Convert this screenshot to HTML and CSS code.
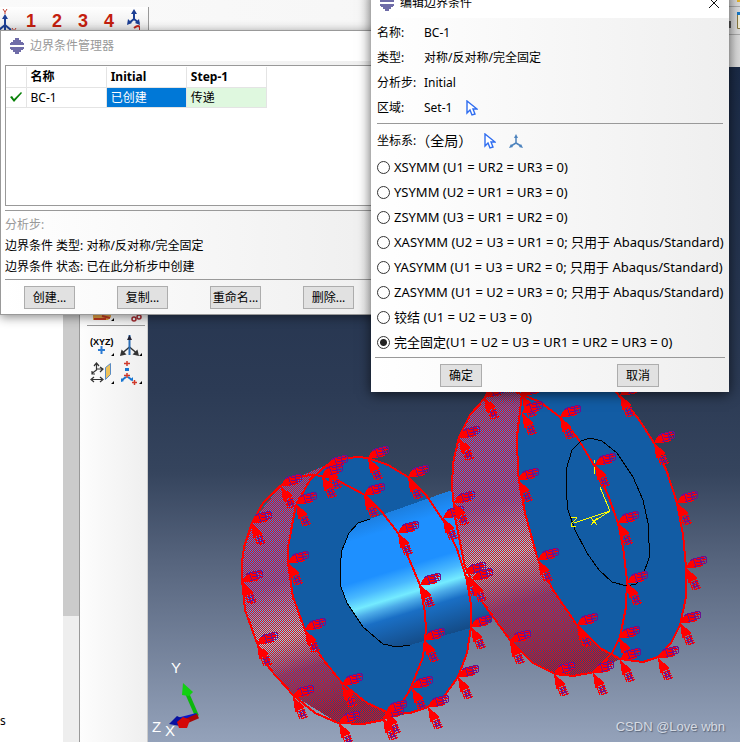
FILE: index.html
```html
<!DOCTYPE html>
<html lang="zh-CN">
<head>
<meta charset="utf-8">
<title>边界条件管理器</title>
<link rel="stylesheet" href="styles.css">
</head>
<body>
<div class="workspace">
  <header class="toolbars">
    <div class="views">
      <svg class="axes" width="18" height="24" viewBox="0 0 18 24"><path d="M5 22V8M5 17l-6 5M5 17l6 5" stroke="#1c3f94" stroke-width="2" fill="none"/><path d="M2 11l3-5 3 5z" fill="#1c3f94"/><path d="M3 1l2 3 2-3M5 4v2M12 20l2 3 2-3" stroke="#c0392b" fill="none"/></svg>
      <button type="button">1</button><button type="button">2</button><button type="button">3</button><button type="button">4</button>
      <svg class="axes" width="18" height="22" viewBox="0 0 18 22"><path d="M12 11V4M12 11l-5 4M12 11l5 4" stroke="#1c3f94" stroke-width="2" fill="none"/><path d="M9 6l3-5 3 5zM5 17l1-6 4 4zM18 17l-1-6-4 4z" fill="#1c3f94"/><path d="M12 20q5-4 6 0v3" stroke="#c0261a" stroke-width="2" fill="none"/></svg>
    </div>
    <div class="side-tools">
      <svg width="11" height="64" viewBox="0 0 11 64"><path d="M0 6.500h11M0 34.500h11" stroke="#aaa"/><path d="M8 0h3v2H8z" fill="#e5b52f"/><path d="M0 21h2v7H0z" fill="#555"/><path d="M8.500 13.500h3v15h-3z" fill="#f4efd6" stroke="#8a7a40"/><path d="M8 12h3v3H8z" fill="#1579c8"/></svg>
    </div>
  </header>
  <main class="main">
    <aside class="tree"><span>s</span></aside>
    <div class="scroll"><div class="thumb"></div></div>
    <nav class="toolbox">
      <svg width="68" height="100" viewBox="80 300 68 100">
        <path d="M93 313h18v4l-3 3H93z" fill="#e5a446"/><path d="M94 319h12M102 316l8 2" stroke="#c23a22" stroke-width="2"/>
        <g fill="none" stroke="#a32a30" stroke-width="1.500"><circle cx="134" cy="319" r="2"/><circle cx="139" cy="317" r="2"/></g>
        <path d="M87 325.500h58" stroke="#999"/>
        <text x="90" y="345" class="xyz">(XYZ)</text>
        <path d="M98 350h7M101.500 346v8" stroke="#2b7bd3" stroke-width="2"/>
        <g stroke="#333" stroke-width="1.500" fill="#333"><path d="M129.500 347l-7 6M129.500 347l7 6"/><path d="M121 355l1-4 3 3zM138 355l-1-4-3 3z"/></g>
        <path d="M129.500 335v20" stroke="#2b6db5" stroke-width="2"/><path d="M127 340l2.500-5 2.500 5z" fill="#223"/>
        <g stroke="#333" stroke-width="1.200" fill="none"><path d="M96.500 364v6l-4 3M96.500 369h6M92 379.500h10M94 366l2.500-3 2.500 3M92 371v3h3M100 367l3 2-3 3M94 377l-3 2.500 3 2.500M100 377l3 2.500-3 2.500"/></g>
        <path d="M105.500 367.500l5-4v11l-5 5z" fill="#efc25a" stroke="#5a8cc4"/>
        <g stroke="#d0392b" stroke-width="1.500"><path d="M124 363.500h6M127 361v5M124 375.500h6M127 373v5M132 382.500h5M134.500 380v5"/></g>
        <path d="M125 368h4v3h-4z" fill="#1675d1"/><path d="M126 377l-4 3M128 377l4 3" stroke="#1675d1" stroke-width="2"/><path d="M121 382v-4l3 3zM133 381v-4l-3 3z" fill="#1675d1"/>
        <path d="M114 318v3h-3zM114 353v3h-3zM142 353v3h-3zM114 381v3h-3zM142 381v3h-3z"/>
      </svg>
    </nav>
    <section class="viewport">
      <svg class="model" viewBox="148 67 592 675" preserveAspectRatio="xMinYMin meet">
        <defs>
          <pattern id="mesh" x="0" y="0" width="2" height="2" patternUnits="userSpaceOnUse"><path d="M1 0h1v1H1zM0 1h1v1H0z" fill="red"/></pattern>
          <linearGradient id="shaft" gradientUnits="userSpaceOnUse" x1="370" y1="519" x2="409" y2="646">
            <stop offset="0" stop-color="#1c80e2"/><stop offset=".12" stop-color="#1e90ff"/><stop offset=".42" stop-color="#1e90ff"/><stop offset=".53" stop-color="#48b8ff"/><stop offset=".62" stop-color="#74ebff"/><stop offset=".68" stop-color="#4cabe8"/><stop offset=".76" stop-color="#1a6fc5"/><stop offset="1" stop-color="#144c88"/>
          </linearGradient>
          <linearGradient id="rimA" gradientUnits="userSpaceOnUse" x1="270" y1="480" x2="340" y2="708">
            <stop offset="0" stop-color="#1c7fe0"/><stop offset=".2" stop-color="#1e90ff"/><stop offset=".42" stop-color="#1e90ff"/><stop offset=".65" stop-color="#74ebff"/><stop offset=".8" stop-color="#1a6fc5"/><stop offset="1" stop-color="#144c88"/>
          </linearGradient>
          <linearGradient id="rimB" gradientUnits="userSpaceOnUse" x1="480" y1="385" x2="566" y2="665">
            <stop offset="0" stop-color="#1c7fe0"/><stop offset=".2" stop-color="#1e90ff"/><stop offset=".4" stop-color="#1e90ff"/><stop offset=".58" stop-color="#74ebff"/><stop offset=".75" stop-color="#1a6fc5"/><stop offset="1" stop-color="#144c88"/>
          </linearGradient>
          <g id="bc">
            <path d="M0 0l2 15 10-5z" fill="red"/>
            <path d="M0 0l5-9 9 0 3 7-9 2z" fill="red"/>
            <g fill="none" stroke="red"><path d="M3 12l4 10M6 11l5 11M9 10l5 11M4 15l8-3M5 18l8-3M7 20l7-3M8 22l7-3"/><path d="M5-8l13-3M5-5l15-4M8-2l12-3M8-9l5 8M12-10l4 8M16-11l3 7"/></g>
            <g fill="none" stroke="#6b1190"><path d="M7 16l5-3M8 19l5-2M9 13l4 8M6 14l3 7"/><path d="M4-7l3-2 12-3 2 3-1 4-12 4M7-9l3 7M14-11l2 7M10-8l9-2M10-5l9-2"/></g>
          </g>
        </defs>
        <g shape-rendering="crispEdges">
          <path d="M300 476L327 465 410 540 410 713 363 724 338 723 293 695 269 668 257 643 245 610 242 580 242 562 252 523 280 486z" fill="url(#rimA)"/>
          <path d="M300 476L327 465 410 540 410 713 363 724 338 723 293 695 269 668 257 643 245 610 242 580 242 562 252 523 280 486z" fill="url(#mesh)"/>
          <path d="M296 505L310 480 327 465 342 459 357 457 368 458 388 465 408 477 426 495 443 520 457 549 467 580 471 605 471 627 467 653 458 677 445 695 428 707 410 713 387 712 367 703 342 683 322 658 305 630 293 597 288 563 288 547z" fill="#125ca4"/>
          <path d="M370 519L452 490 475 540 492 622 410 645 397 647 383 644 363 627 347 603 341 587 340 567 342 550 349 533 358 523z" fill="url(#shaft)"/>
          <path d="M370 519L358 523 349 533 342 550 340 567 341 587 347 603 363 627 383 644 397 647 410 645" fill="none" stroke="#000"/>
          <path d="M300 476L280 486 263 503 252 523 244 547 242 562 242 580 245 610 257 643 269 668 293 695 315 713 338 723 363 724 383 720 398 709 410 690 423 657 426 630 425 613 420 585 398 533 382 512 365 495 333 478 315 475z" class="edge"/>
          <path d="M296 505L310 480 327 465 342 459 357 457 368 458 388 465 408 477 426 495 443 520 457 549 467 580 471 605 471 627 467 653 458 677 445 695 428 707 410 713 387 712 367 703 342 683 322 658 305 630 293 597 288 563 288 547z" class="edge"/>
          <path d="M485 398L500 385 560 365 620 659 595 672 573 676 555 674 533 663 510 640 483 603 473 583 465 567 455 517 452 487 453 463 459 437 470 415z" fill="url(#rimB)"/>
          <path d="M485 398L500 385 560 365 620 659 595 672 573 676 555 674 533 663 510 640 483 603 473 583 465 567 455 517 452 487 453 463 459 437 470 415z" fill="url(#mesh)"/>
          <path d="M522 393L535 370 600 370 620 397 638 418 654 443 667 472 677 503 683 535 686 567 686 597 680 625 671 643 658 657 643 662 620 659 600 648 577 625 553 590 538 560 525 513 518 473 517 437z" fill="#125ca4" class="edge"/>
          <path d="M500 385L485 398 470 415 459 437 453 463 452 487 455 517 465 567 473 583 483 603 510 640 533 663 555 674 573 676 595 672 612 653 620 637 626 607 627 580 623 547 618 523 608 495 595 467 577 437 560 417 540 402 523 395 500 385z" class="edge"/>
          <path d="M590 438L581 441 572 450 566 470 566 490 568 510 575 530 587 553 599 570 612 582 627 586 636 584 643 575 649 558 649 543 648 523 643 500 633 477 617 453 602 441z" fill="none" stroke="#000"/>
          <path d="M594 460v3M594 467v7M600 487l10 24-36 12M610 511l-17 11" fill="none" stroke="#ff0"/>
          <path d="M571 517h5v2l-5 5v2h5M591 518l6 7M597 518l-6 7" fill="none" stroke="#ff0"/>
          <use href="#bc" x="368" y="458"/><use href="#bc" x="408" y="477"/><use href="#bc" x="443" y="518"/><use href="#bc" x="327" y="467"/><use href="#bc" x="322" y="476"/><use href="#bc" x="281" y="486"/><use href="#bc" x="296" y="504"/><use href="#bc" x="364" y="495"/><use href="#bc" x="398" y="533"/><use href="#bc" x="420" y="585"/><use href="#bc" x="424" y="640"/><use href="#bc" x="412" y="688"/><use href="#bc" x="428" y="707"/><use href="#bc" x="383" y="718"/><use href="#bc" x="386" y="712"/><use href="#bc" x="342" y="685"/><use href="#bc" x="339" y="723"/><use href="#bc" x="293" y="697"/><use href="#bc" x="257" y="644"/><use href="#bc" x="242" y="582"/><use href="#bc" x="251" y="523"/><use href="#bc" x="288" y="563"/><use href="#bc" x="305" y="630"/><use href="#bc" x="465" y="574"/><use href="#bc" x="471" y="627"/><use href="#bc" x="458" y="677"/>
          <use href="#bc" x="484" y="397"/><use href="#bc" x="459" y="438"/><use href="#bc" x="454" y="503"/><use href="#bc" x="472" y="580"/><use href="#bc" x="522" y="395"/><use href="#bc" x="522" y="413"/><use href="#bc" x="560" y="417"/><use href="#bc" x="620" y="395"/><use href="#bc" x="654" y="443"/><use href="#bc" x="677" y="503"/><use href="#bc" x="686" y="568"/><use href="#bc" x="680" y="623"/><use href="#bc" x="658" y="658"/><use href="#bc" x="595" y="465"/><use href="#bc" x="618" y="523"/><use href="#bc" x="627" y="583"/><use href="#bc" x="619" y="638"/><use href="#bc" x="620" y="660"/><use href="#bc" x="593" y="673"/><use href="#bc" x="554" y="674"/><use href="#bc" x="510" y="642"/><use href="#bc" x="577" y="625"/><use href="#bc" x="538" y="560"/><use href="#bc" x="518" y="480"/>
        </g>
        <path d="M197 716l-10-23" stroke="#0bb80b" stroke-width="4"/><path d="M183 683l10 9-4 4-7-1z" fill="#12d012"/>
        <path d="M197 715l-20 5" stroke="#0b16c8" stroke-width="4"/><path d="M169 724l8-8 4 2-1 8z" fill="#0710a0"/>
        <path d="M198 716l-14 6" stroke="#a80606" stroke-width="5"/><path d="M177 722l6-5 7 3-3 8h-8z" fill="#d40808"/>
        <g class="axis-name"><text x="171" y="673">Y</text><text x="152" y="732">Z</text><text x="165" y="736">X</text></g>
      </svg>
      <p class="watermark">CSDN @Love wbn</p>
    </section>
  </main>

  <section class="window manager">
    <h1 class="titlebar"><svg width="16" height="16" viewBox="0 0 16 16"><path d="M6 0h4v2h2v2h2v1h1v2H1V5h1V4h2V2h2zM1 9h14v2h-1v1h-2v2h-2v2H6v-2H4v-2H2v-1H1z" fill="#6f6ca8"/></svg><span>边界条件管理器</span></h1>
    <div class="list">
      <table>
        <thead><tr><th class="mark"></th><th>名称</th><th>Initial</th><th>Step-1</th></tr></thead>
        <tbody><tr><td class="mark"><svg width="14" height="12" viewBox="0 0 14 12"><path d="M1 6l2-1 2 3 7-7 1 1-8 9z" fill="#088008"/></svg></td><td>BC-1</td><td class="picked">已创建</td><td class="passed">传递</td></tr></tbody>
      </table>
    </div>
    <div class="status">
      <p class="muted">分析步:</p>
      <p>边界条件 类型: 对称/反对称/完全固定</p>
      <p>边界条件 状态: 已在此分析步中创建</p>
    </div>
    <div class="actions"><button type="button">创建...</button><button type="button">复制...</button><button type="button">重命名...</button><button type="button">删除...</button></div>
  </section>

  <form class="window editor">
    <h2 class="titlebar"><svg width="16" height="16" viewBox="0 0 16 16"><path d="M6 0h4v2h2v2h2v1h1v2H1V5h1V4h2V2h2zM1 9h14v2h-1v1h-2v2h-2v2H6v-2H4v-2H2v-1H1z" fill="#6f6ca8"/></svg><span>编辑边界条件</span><button type="button" class="close" aria-label="关闭"><svg width="12" height="12" viewBox="0 0 12 12"><path d="M1 1l10 10M11 1L1 11" stroke="#111" fill="none"/></svg></button></h2>
    <dl class="facts">
      <div><dt>名称:</dt><dd>BC-1</dd></div>
      <div><dt>类型:</dt><dd>对称/反对称/完全固定</dd></div>
      <div><dt>分析步:</dt><dd>Initial</dd></div>
      <div><dt>区域:</dt><dd>Set-1 <svg width="12" height="16" viewBox="0 0 12 16"><path d="M1 1v12l3-3 2 5 3-1-2-5h4z" fill="#fff" stroke="#2f6df0" stroke-width="1.400"/></svg></dd></div>
    </dl>
    <div class="csys"><span>坐标系:</span><span class="global">（全局）</span><svg width="12" height="16" viewBox="0 0 12 16"><path d="M1 1v12l3-3 2 5 3-1-2-5h4z" fill="#fff" stroke="#2f6df0" stroke-width="1.400"/></svg><svg width="16" height="16" viewBox="0 0 16 16"><path d="M8 10V3M8 10l-5 3M8 10l5 3" stroke="#4d83bd" stroke-width="1.500" fill="none"/><path d="M6 5l2-4 2 4zM1 15l2-4 2 3zM15 15l-2-4-2 3z" fill="#4d83bd"/></svg></div>
    <div class="options">
      <label><input type="radio" name="bc">XSYMM (U1 = UR2 = UR3 = 0)</label>
      <label><input type="radio" name="bc">YSYMM (U2 = UR1 = UR3 = 0)</label>
      <label><input type="radio" name="bc">ZSYMM (U3 = UR1 = UR2 = 0)</label>
      <label><input type="radio" name="bc">XASYMM (U2 = U3 = UR1 = 0; 只用于 Abaqus/Standard)</label>
      <label><input type="radio" name="bc">YASYMM (U1 = U3 = UR2 = 0; 只用于 Abaqus/Standard)</label>
      <label><input type="radio" name="bc">ZASYMM (U1 = U2 = UR3 = 0; 只用于 Abaqus/Standard)</label>
      <label><input type="radio" name="bc">铰结 (U1 = U2 = U3 = 0)</label>
      <label><input type="radio" name="bc" checked>完全固定(U1 = U2 = U3 = UR1 = UR2 = UR3 = 0)</label>
    </div>
    <div class="confirm"><button type="button">确定</button><button type="button">取消</button></div>
  </form>
</div>
</body>
</html>
```
FILE: styles.css
```css
* { box-sizing: border-box; }
body, h1, h2, p, dl, dd { margin: 0; }
body {
  font: 12px/20px "Noto Sans", "Noto Sans CJK SC", sans-serif;
  color: #000;
  background: #f0f0f0;
}
button { font: inherit; color: inherit; }
svg { display: block; flex: none; }

.workspace {
  position: relative;
  display: flex;
  flex-direction: column;
  min-height: 100vh;
  overflow: hidden;
}
.toolbars {
  display: flex;
  justify-content: space-between;
  height: 67px;
  padding-top: 7px;
  background: linear-gradient(90deg, #fafafa, #f6f6f6 60%, #dcdcdc);
}
.views {
  display: flex;
  align-items: flex-start;
  width: 149px;
  height: 28px;
  border-right: 1px solid #999;
  background: linear-gradient(#fff, #e6e6e6);
}
.views .axes { margin-top: 1px; }
.views button {
  width: 26px;
  padding: 0;
  border: 0;
  background: none;
  color: #c41e0e;
  font: 700 18px/28px "Liberation Sans", sans-serif;
}
.side-tools { margin-top: -7px; }

.main { display: flex; flex: 1; }
.tree {
  display: flex;
  align-items: flex-end;
  width: 63px;
  padding-bottom: 11px;
  background: #fff;
}
.scroll { width: 16px; background: #eee; }
.thumb { height: 549px; background: #cbcbcb; }
.toolbox {
  width: 69px;
  padding-top: 233px;
  border-left: 1px solid #999;
  border-right: 1px solid #ccc;
  background: linear-gradient(90deg, #fdfdfd, #efefef);
}
.xyz { font: 700 9px "Liberation Sans", sans-serif; }
.viewport {
  position: relative;
  flex: 1;
  background: linear-gradient(#1b2b47, #2c3b55 48%, #35445d 60%, #56647d 73%, #94a2ba);
}
.model { width: 100%; }
.edge { stroke: red; stroke-width: 2; }
.edge:not([fill]) { fill: none; }
.axis-name { fill: #fff; font: 15px "Liberation Sans", sans-serif; }
.watermark {
  position: absolute;
  right: 15px;
  bottom: 5px;
  color: #d6dbe3;
  font: 13px/20px "Liberation Sans", sans-serif;
  text-shadow: 1px 1px 1px #5b6679;
}

.window {
  position: absolute;
  border: 1px solid #999;
  background: linear-gradient(90deg, #fff, #efefef);
}
.titlebar {
  display: flex;
  align-items: center;
  gap: 5px;
  height: 30px;
  padding-left: 8px;
  background: #fff;
  font-size: 12px;
  font-weight: 400;
}
.window > div > button {
  height: 23px;
  padding: 0;
  border: 1px solid #adadad;
  background: #e1e1e1;
  line-height: 20px;
}
.manager {
  top: 30px;
  left: 0;
  width: 380px;
  box-shadow: 0 2px 10px #0007;
}
.manager .titlebar { color: #999; }
.list {
  height: 141px;
  margin: 4px 0 4px 4px;
  padding: 1px 0;
  border: 1px solid #999;
  background: #fff;
}
table { border-collapse: collapse; table-layout: fixed; width: 261px; }
th, td {
  width: 80px;
  height: 20px;
  padding: 0 0 0 4px;
  border-right: 1px solid #e4e4e4;
  border-bottom: 1px solid #e4e4e4;
  line-height: 19px;
  text-align: left;
}
.mark { width: 20px; padding-left: 3px; }
.picked { background: #0078d7; color: #fff; }
.passed { background: #dff8df; }
.status {
  margin-left: 4px;
  padding: 3px 0 2px;
  border-top: 1px solid #999;
  border-bottom: 1px solid #999;
}
.status p { line-height: 21px; }
.muted { color: #999; }
.actions {
  display: flex;
  gap: 42px;
  padding: 6px 0 5px 23px;
}
.actions button { width: 51px; }

.editor {
  top: -12px;
  right: 11px;
  width: 358px;
  border-width: 0;
  box-shadow: 0 2px 12px #000a;
}
.close {
  margin-left: auto;
  margin-right: 9px;
  padding: 0;
  border: 0;
  background: none;
}
.facts {
  margin: 0 6px;
  padding: 2px 0 3px;
  border-bottom: 1px solid #999;
}
.facts div { display: flex; line-height: 25px; }
.facts dt { width: 47px; }
.facts dd { display: flex; align-items: center; gap: 14px; }
.csys {
  display: flex;
  align-items: center;
  height: 31px;
  padding: 2px 6px 0;
}
.global { width: 68px; font-size: 14px; }
.csys svg + svg { margin-left: 12px; }
.options {
  margin: 0 4px;
  padding-bottom: 2px;
  border-bottom: 1px solid #999;
  font-size: 13px;
}
.options label {
  display: flex;
  align-items: center;
  gap: 4px;
  padding-left: 2px;
  line-height: 25px;
  white-space: nowrap;
}
.options input {
  appearance: none;
  width: 13px;
  height: 13px;
  margin: 0;
  border: 1px solid #333;
  border-radius: 50%;
  background: #fff;
}
.options input:checked { background: radial-gradient(#222 0 3px, #fff 4px); }
.confirm {
  display: flex;
  justify-content: space-between;
  padding: 6px 70px 5px 69px;
}
.confirm button { width: 42px; }
```
